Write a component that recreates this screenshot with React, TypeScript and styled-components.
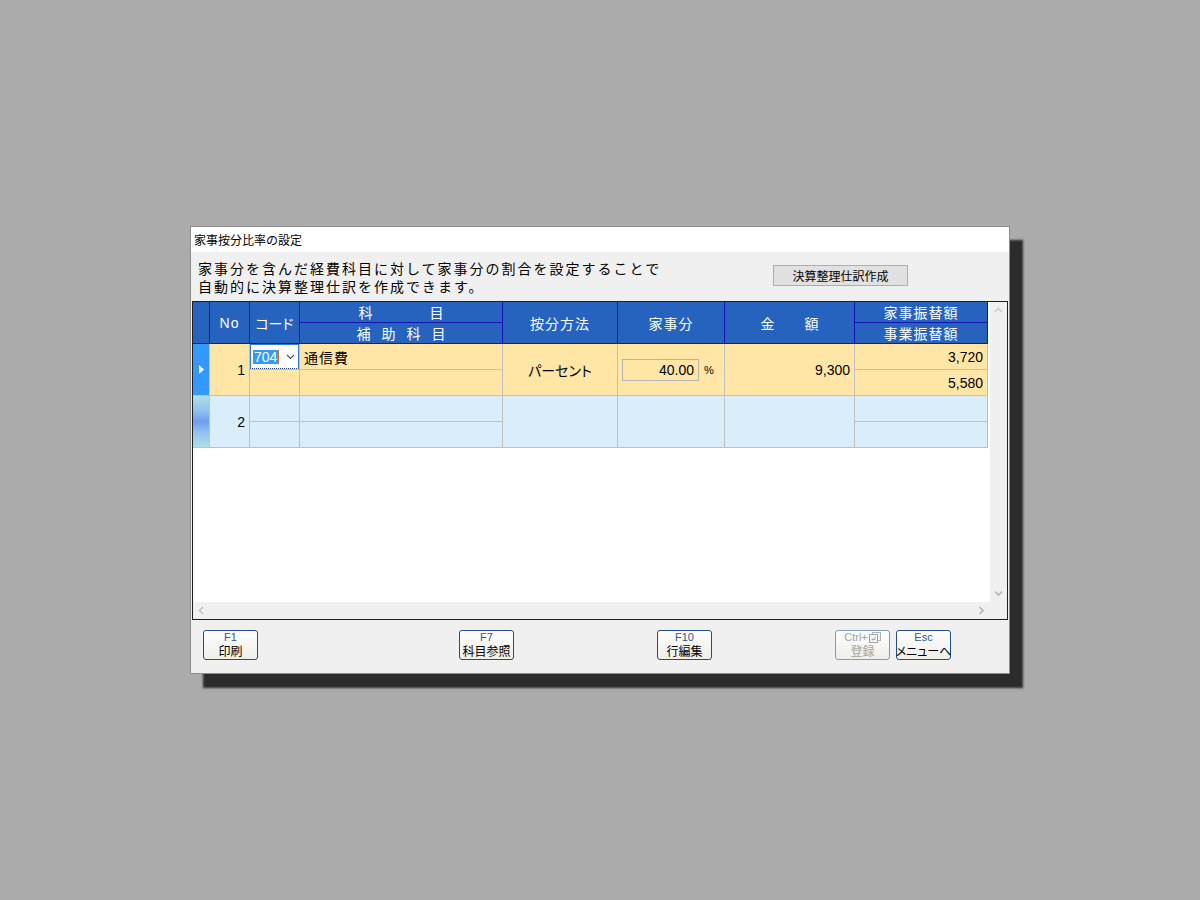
import styled, { createGlobalStyle } from "styled-components";

const COLS = "16px 39px 49px 202px 114px 106px 129px 132px";

const GlobalStyle = createGlobalStyle`
  html, body {
    margin: 0;
    padding: 0;
  }
  body {
    background: #ababab;
    font-family: "Liberation Sans", "Noto Sans CJK JP", sans-serif;
    color: #000;
  }
`;

const Screen = styled.div`
  height: 100vh;
  display: flex;
  align-items: center;
  justify-content: center;
`;

const Window = styled.div`
  width: 820px;
  height: 448px;
  box-sizing: border-box;
  border: 1px solid #8c8c8c;
  background: #f0f0f0;
  box-shadow: 13px 14px 2px rgba(0, 0, 0, 0.75);
  display: flex;
  flex-direction: column;
`;

const TitleBar = styled.div`
  height: 25px;
  flex: none;
  background: #fff;
  padding-left: 3px;
  font-family: "Noto Sans CJK JP", sans-serif;
  font-size: 12px;
  line-height: 25px;
`;

const Intro = styled.div`
  height: 49px;
  flex: none;
  display: flex;
  align-items: flex-start;
`;

const Description = styled.p`
  margin: 0;
  padding: 7px 0 0 7px;
  font-family: "Noto Sans CJK JP", sans-serif;
  font-size: 14px;
  line-height: 18px;
  letter-spacing: 2px;
`;

const FlatButton = styled.button`
  margin: 13px 101px 0 auto;
  width: 135px;
  height: 21px;
  padding: 0;
  border: 1px solid #adadad;
  background: #e1e1e1;
  color: #000;
  font-family: "Noto Sans CJK JP", sans-serif;
  font-size: 12px;
  line-height: 19px;
`;

const GridFrame = styled.div`
  margin: 0 1px;
  height: 319px;
  flex: none;
  box-sizing: border-box;
  border: 1px solid #1e1e1e;
  display: flex;
  flex-direction: column;
`;

const GridMain = styled.div`
  flex: 1;
  display: flex;
  min-height: 0;
`;

const Viewport = styled.div`
  flex: 1;
  background: #fff;
  overflow: hidden;
`;

const VScroll = styled.div`
  width: 17px;
  background: #f0f0f0;
  display: flex;
  flex-direction: column;
  justify-content: space-between;
`;

const HScroll = styled.div`
  height: 17px;
  flex: none;
  background: #f0f0f0;
  display: flex;
`;

const ArrowBox = styled.div<{ $push?: boolean }>`
  width: 17px;
  height: 17px;
  flex: none;
  display: flex;
  align-items: center;
  justify-content: center;
  margin-left: ${(p) => (p.$push ? "auto" : "0")};
`;

const Corner = styled.div`
  width: 17px;
  height: 17px;
  flex: none;
`;

const HeaderGrid = styled.div`
  display: grid;
  grid-template-columns: ${COLS};
  grid-template-rows: 20px 20px;
  gap: 1px;
  width: max-content;
  background: #1414b4;
  border-right: 1px solid #1414b4;
  border-bottom: 1px solid #1414b4;
`;

const HeadCell = styled.div<{ $span?: boolean }>`
  grid-row: ${(p) => (p.$span ? "span 2" : "auto")};
  background: #2563bf;
  color: #fff;
  font-size: 14px;
  letter-spacing: 1px;
  display: flex;
  align-items: center;
  justify-content: center;
  font-feature-settings: "palt";
`;

const Spread = styled.span<{ $gap: number }>`
  display: flex;
  gap: ${(p) => p.$gap}px;
  letter-spacing: 0;
  font-family: "Noto Sans CJK JP", sans-serif;
`;

const RowGrid = styled.div<{ $tone: "current" | "blank" }>`
  --cell: ${(p) => (p.$tone === "current" ? "#ffe6a6" : "#daeef9")};
  display: grid;
  grid-template-columns: ${COLS};
  grid-template-rows: 25px 25px;
  gap: 1px;
  width: max-content;
  background: #c0c0c0;
  border-right: 1px solid #c0c0c0;
  border-bottom: 1px solid #c0c0c0;
`;

const Marker = styled.div<{ $current?: boolean }>`
  grid-row: span 2;
  background: ${(p) =>
    p.$current
      ? "#3399ff"
      : "linear-gradient(#aee0e8 0%, #8fc0ee 30%, #6f9ef0 50%, #8fc0ee 70%, #aee0e8 100%)"};
  display: flex;
  align-items: center;
  justify-content: center;
`;

const Cell = styled.div<{ $span?: boolean; $align?: "left" | "center" | "right" }>`
  grid-row: ${(p) => (p.$span ? "span 2" : "auto")};
  background: var(--cell);
  display: flex;
  align-items: center;
  justify-content: ${(p) =>
    p.$align === "right" ? "flex-end" : p.$align === "center" ? "center" : "flex-start"};
  padding: 0 4px;
  font-size: 14px;
  overflow: hidden;
  white-space: nowrap;
`;

const JpText = styled.span<{ $palt?: boolean }>`
  font-family: "Noto Sans CJK JP", sans-serif;
  letter-spacing: ${(p) => (p.$palt ? "0" : "1px")};
  font-feature-settings: ${(p) => (p.$palt ? '"palt"' : "normal")};
`;

const CodeEditor = styled.div`
  background: #fff;
  box-sizing: border-box;
  border: 1px solid #2b7be0;
  border-bottom: 1px dotted #1c3c7a;
  display: flex;
  align-items: center;
  padding: 0 3px 0 2px;
  font-size: 14px;
`;

const Selected = styled.span`
  background: #3399ff;
  color: #fff;
  line-height: 14px;
  padding: 0 1px;
  border-right: 1px solid #d0701a;
`;

const Caret = styled.svg`
  margin-left: auto;
`;

const RateBox = styled.div`
  width: 77px;
  height: 22px;
  box-sizing: border-box;
  border: 1px solid #b4b4b4;
  display: flex;
  align-items: center;
  justify-content: flex-end;
  padding-right: 4px;
`;

const Unit = styled.span`
  margin-left: 5px;
  font-size: 11px;
`;

const Footer = styled.div`
  flex: 1;
  display: flex;
  align-items: flex-start;
  padding: 10px 0 0 12px;
`;

const KeyButton = styled.div<{ $gap: number; $disabled?: boolean }>`
  width: 55px;
  height: 30px;
  margin-left: ${(p) => p.$gap}px;
  box-sizing: border-box;
  border: 1px solid ${(p) => (p.$disabled ? "#7d9cbf" : "#1f4f86")};
  border-radius: 3px;
  background: linear-gradient(#fefefe, #efeee8);
  display: flex;
  flex-direction: column;
  align-items: center;
  justify-content: center;
  color: ${(p) => (p.$disabled ? "#a4a4a4" : "#000")};
`;

const KeyName = styled.span<{ $disabled?: boolean }>`
  display: flex;
  align-items: center;
  gap: 1px;
  height: 12px;
  font-size: 11px;
  line-height: 12px;
  margin-top: -1px;
  color: ${(p) => (p.$disabled ? "#a4a4a4" : "#2e5a8e")};
`;

const KeyLabel = styled.span`
  display: block;
  height: 14px;
  margin-top: 1px;
  font-family: "Noto Sans CJK JP", sans-serif;
  font-size: 12px;
  line-height: 14px;
  font-feature-settings: "palt";
  white-space: nowrap;
`;

function Chevron({ dir, color }: { dir: "up" | "down" | "left" | "right"; color: string }) {
  const pts = {
    up: "1,5 4.5,1.5 8,5",
    down: "1,1.5 4.5,5 8,1.5",
    left: "5,1 1.5,4.5 5,8",
    right: "1.5,1 5,4.5 1.5,8",
  }[dir];
  const vertical = dir === "up" || dir === "down";
  return (
    <svg width={vertical ? 9 : 7} height={vertical ? 7 : 9}>
      <polyline points={pts} fill="none" stroke={color} strokeWidth="1.6" />
    </svg>
  );
}

function SpreadText({ text, gap }: { text: string; gap: number }) {
  return (
    <Spread $gap={gap}>
      {text.split("").map((c, i) => (
        <span key={i}>{c}</span>
      ))}
    </Spread>
  );
}

function EnterIcon() {
  return (
    <svg width="12" height="11" viewBox="0 0 12 11">
      <rect x="3.5" y="0.5" width="8" height="8" fill="none" stroke="#b0b0b0" />
      <rect x="0.5" y="2.5" width="8" height="8" fill="#f6f6f4" stroke="#a4a4a4" />
      <polyline points="6,4.5 6,7.5 3,7.5" fill="none" stroke="#a4a4a4" />
      <polyline points="4,6.5 3,7.5 4,8.5" fill="none" stroke="#a4a4a4" />
    </svg>
  );
}

export default function App() {
  return (
    <>
      <GlobalStyle />
      <Screen>
        <Window>
          <TitleBar>家事按分比率の設定</TitleBar>
          <Intro>
            <Description>
              家事分を含んだ経費科目に対して家事分の割合を設定することで
              <br />
              自動的に決算整理仕訳を作成できます。
            </Description>
            <FlatButton>決算整理仕訳作成</FlatButton>
          </Intro>
          <GridFrame>
            <GridMain>
              <Viewport>
                <HeaderGrid>
                  <HeadCell $span />
                  <HeadCell $span>No</HeadCell>
                  <HeadCell $span>
                    <JpText $palt>コード</JpText>
                  </HeadCell>
                  <HeadCell>
                    <SpreadText text="科目" gap={57} />
                  </HeadCell>
                  <HeadCell $span>
                    <JpText>按分方法</JpText>
                  </HeadCell>
                  <HeadCell $span>
                    <JpText>家事分</JpText>
                  </HeadCell>
                  <HeadCell $span>
                    <SpreadText text="金額" gap={30} />
                  </HeadCell>
                  <HeadCell>
                    <JpText>家事振替額</JpText>
                  </HeadCell>
                  <HeadCell>
                    <SpreadText text="補助科目" gap={11} />
                  </HeadCell>
                  <HeadCell>
                    <JpText>事業振替額</JpText>
                  </HeadCell>
                </HeaderGrid>

                <RowGrid $tone="current">
                  <Marker $current>
                    <svg width="5" height="9">
                      <polygon points="0,0 5,4.5 0,9" fill="#fff" />
                    </svg>
                  </Marker>
                  <Cell $span $align="right">1</Cell>
                  <CodeEditor>
                    <Selected>704</Selected>
                    <Caret width="9" height="6">
                      <polyline points="1,1 4.5,4.5 8,1" fill="none" stroke="#555" strokeWidth="1.2" />
                    </Caret>
                  </CodeEditor>
                  <Cell>
                    <JpText>通信費</JpText>
                  </Cell>
                  <Cell $span $align="center">
                    <JpText $palt>パーセント</JpText>
                  </Cell>
                  <Cell $span>
                    <RateBox>40.00</RateBox>
                    <Unit>%</Unit>
                  </Cell>
                  <Cell $span $align="right">9,300</Cell>
                  <Cell $align="right">3,720</Cell>
                  <Cell />
                  <Cell />
                  <Cell $align="right">5,580</Cell>
                </RowGrid>

                <RowGrid $tone="blank">
                  <Marker />
                  <Cell $span $align="right">2</Cell>
                  <Cell />
                  <Cell />
                  <Cell $span />
                  <Cell $span />
                  <Cell $span />
                  <Cell />
                  <Cell />
                  <Cell />
                  <Cell />
                </RowGrid>
              </Viewport>
              <VScroll>
                <ArrowBox>
                  <Chevron dir="up" color="#cdcdcd" />
                </ArrowBox>
                <ArrowBox>
                  <Chevron dir="down" color="#b4b4b4" />
                </ArrowBox>
              </VScroll>
            </GridMain>
            <HScroll>
              <ArrowBox>
                <Chevron dir="left" color="#c4c4c4" />
              </ArrowBox>
              <ArrowBox $push>
                <Chevron dir="right" color="#b4b4b4" />
              </ArrowBox>
              <Corner />
            </HScroll>
          </GridFrame>
          <Footer>
            <KeyButton $gap={0}>
              <KeyName>F1</KeyName>
              <KeyLabel>印刷</KeyLabel>
            </KeyButton>
            <KeyButton $gap={201}>
              <KeyName>F7</KeyName>
              <KeyLabel>科目参照</KeyLabel>
            </KeyButton>
            <KeyButton $gap={143}>
              <KeyName>F10</KeyName>
              <KeyLabel>行編集</KeyLabel>
            </KeyButton>
            <KeyButton $gap={123} $disabled>
              <KeyName $disabled>
                Ctrl+
                <EnterIcon />
              </KeyName>
              <KeyLabel>登録</KeyLabel>
            </KeyButton>
            <KeyButton $gap={6}>
              <KeyName>Esc</KeyName>
              <KeyLabel>メニューへ</KeyLabel>
            </KeyButton>
          </Footer>
        </Window>
      </Screen>
    </>
  );
}
